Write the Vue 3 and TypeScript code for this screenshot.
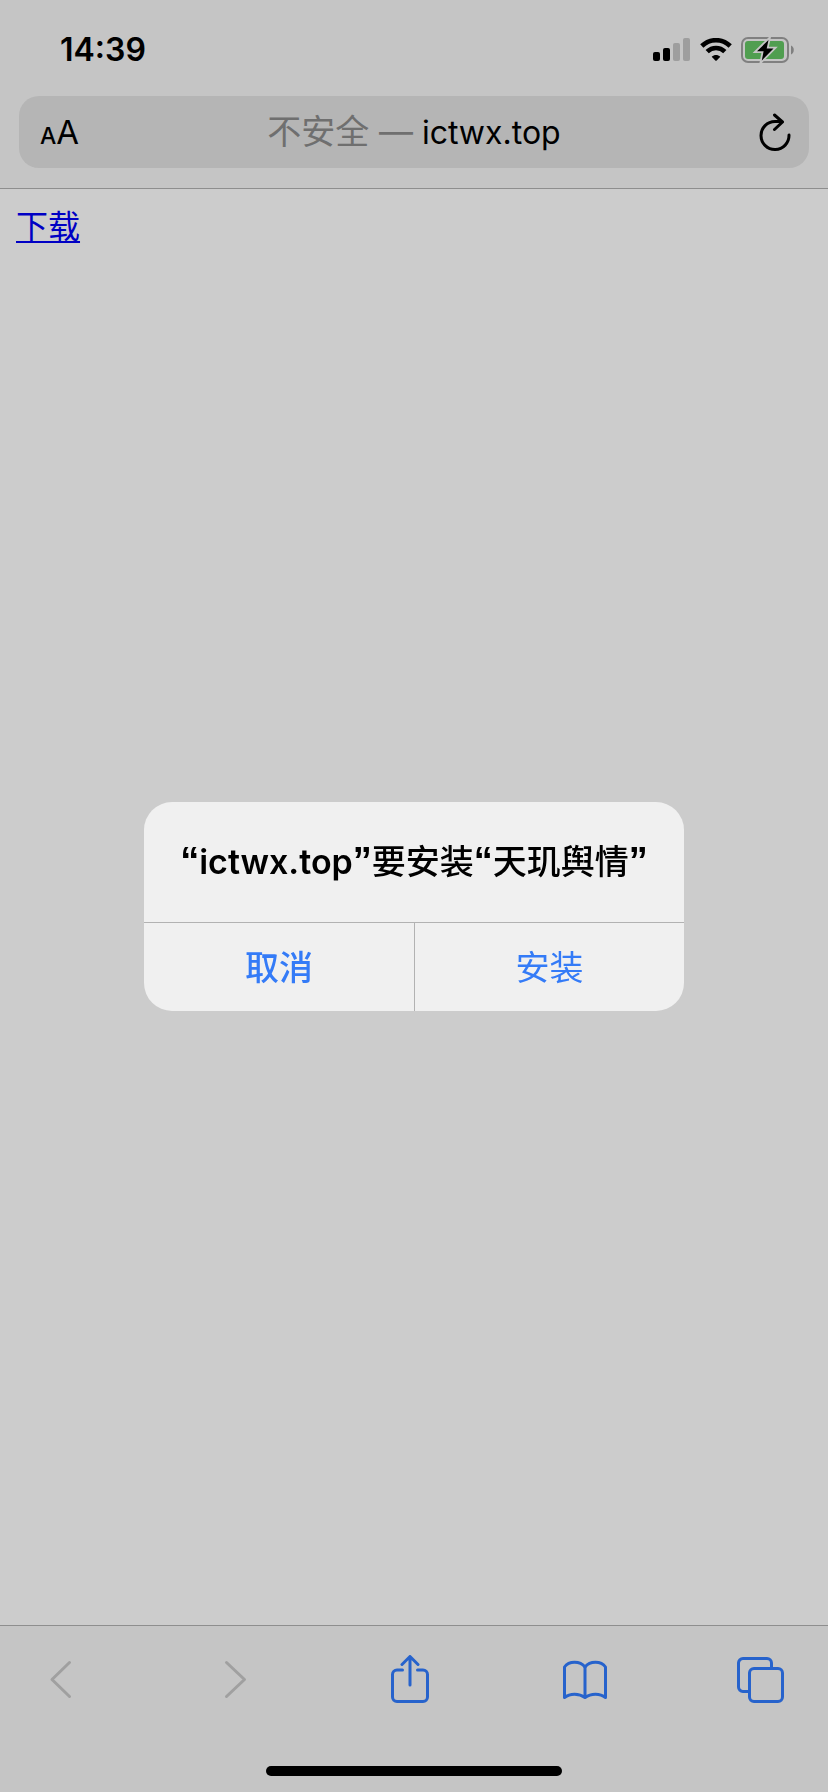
<script setup lang="ts">
import { ref } from 'vue'

interface Tool {
  name: string
  label: string
  disabled: boolean
  paths: string[]
}

const host = 'ictwx.top'
const appName = '天玑舆情'
const alertOpen = ref(true)

const tools: Tool[] = [
  { name: 'back', label: '后退', disabled: true, paths: ['M33.5 7.5 16 24.5 33.5 41.5'] },
  { name: 'forward', label: '前进', disabled: true, paths: ['M15.5 7.5 33.5 24.5 15.5 41.5'] },
  {
    name: 'share',
    label: '共享',
    disabled: false,
    paths: [
      'M16.5 15H11a4.5 4.5 0 0 0-4.5 4.5V42a4.5 4.5 0 0 0 4.5 4.5h26a4.5 4.5 0 0 0 4.5-4.5V19.5A4.5 4.5 0 0 0 37 15h-5.5',
      'M24 30V2M16 9.5l8-8 8 8',
    ],
  },
  {
    name: 'bookmarks',
    label: '书签',
    disabled: false,
    paths: [
      'M3.5 42.5V12C8 5.7 19 5.7 24 12 29 5.7 40 5.7 44.5 12V42.5C39 38 30 38 24 42.5 18 38 9 38 3.5 42.5Z',
      'M24 12V42',
    ],
  },
  {
    name: 'tabs',
    label: '标签页',
    disabled: false,
    paths: [
      'M13 36.5H7A4.5 4.5 0 0 1 2.5 32V8A4.5 4.5 0 0 1 7 3.5H31A4.5 4.5 0 0 1 35.5 8V13',
      'M18 13.5H42A4.5 4.5 0 0 1 46.5 18V42A4.5 4.5 0 0 1 42 46.5H18A4.5 4.5 0 0 1 13.5 42V18A4.5 4.5 0 0 1 18 13.5Z',
    ],
  },
]
</script>

<template>
  <div class="screen">
    <header class="top">
      <div class="status">
        <time class="clock">14:39</time>
        <div class="indicators">
          <svg class="signal" viewBox="0 0 38 24" aria-hidden="true">
            <rect x="0" y="14" width="7" height="9" rx="2" />
            <rect x="10" y="10" width="7" height="13" rx="2" />
            <rect class="faint" x="20" y="5" width="7" height="18" rx="2" />
            <rect class="faint" x="30" y="0" width="7" height="23" rx="2" />
          </svg>
          <svg class="wifi" viewBox="0 0 32 24" aria-hidden="true">
            <path class="arc" d="M1.8 8C9.8 .2 22.2 .2 30.2 8" />
            <path class="arc" d="M7.2 13.6C12.2 8.7 19.8 8.7 24.8 13.6" />
            <path d="M11.7 18.7C14.2 16.5 17.8 16.5 20.3 18.7L16.7 22.5Q16 23.2 15.3 22.5Z" />
          </svg>
          <svg class="battery" viewBox="0 0 54 26" aria-hidden="true">
            <rect class="shell" x="1" y="1" width="46" height="24" rx="6" />
            <rect class="charge" x="4" y="4" width="39" height="18" rx="3" />
            <path class="tip" d="M50 8.5C53.7 10 53.7 16 50 17.5Z" />
            <path class="bolt" d="M27.5 3 16 14.2H22.6L20.8 23.5 32.5 11.6H25.7Z" />
          </svg>
        </div>
      </div>
      <div class="address">
        <button class="reader" type="button" aria-label="网页显示设置">
          <span class="small-a">A</span><span class="large-a">A</span>
        </button>
        <button class="location" type="button">
          <span class="insecure">不安全 —</span> {{ host }}
        </button>
        <button class="reload" type="button" aria-label="重新载入">
          <svg viewBox="0 0 32 38" aria-hidden="true">
            <path d="M30 22A14 14 0 1 1 16 8.5H23M15.5 2 23.5 9 15.5 16.5" />
          </svg>
        </button>
      </div>
    </header>

    <main class="page">
      <a class="download" href="#download">下载</a>
    </main>

    <footer class="bottom">
      <nav class="tools" aria-label="工具栏">
        <button
          v-for="tool in tools"
          :key="tool.name"
          class="tool"
          type="button"
          :aria-label="tool.label"
          :disabled="tool.disabled"
        >
          <svg viewBox="0 0 48 48" aria-hidden="true">
            <path v-for="d in tool.paths" :key="d" :d="d" />
          </svg>
        </button>
      </nav>
      <div class="home"></div>
    </footer>

    <div v-if="alertOpen" class="overlay">
      <section class="alert" role="alertdialog" aria-modal="true" aria-labelledby="alert-title">
        <h1 id="alert-title" class="alert-title">
          <span class="quote">“</span><span class="host">{{ host }}</span><span class="quote">”</span>要安装<span class="quote">“</span>{{ appName }}<span class="quote">”</span>
        </h1>
        <div class="actions">
          <button class="action cancel" type="button" @click="alertOpen = false">取消</button>
          <button class="action install" type="button" @click="alertOpen = false">安装</button>
        </div>
      </section>
    </div>
  </div>
</template>

<style>
body {
  margin: 0;
  background: #ccc;
}
</style>

<style scoped>
.screen {
  display: flex;
  flex-direction: column;
  min-height: 100vh;
  background: #ccc;
  color: #000;
  font-family: Inter, 'Noto Sans CJK SC', sans-serif;
}

button {
  margin: 0;
  padding: 0;
  border: 0;
  background: none;
  color: inherit;
  font: inherit;
}

svg {
  display: block;
}

.top {
  padding-bottom: 20px;
  border-bottom: 1px solid #8e8e8e;
  background: #c5c5c5;
}

.status {
  display: flex;
  align-items: center;
  justify-content: space-between;
  height: 96px;
  padding: 4px 33px 0 60px;
  box-sizing: border-box;
}

.clock {
  font-size: 32px;
  font-weight: 600;
  line-height: 40px;
}

.indicators {
  display: flex;
  align-items: center;
  gap: 9px;
}

.signal {
  width: 38px;
  height: 24px;
}

.faint {
  fill: #9e9e9e;
}

.wifi {
  width: 32px;
  height: 24px;
}

.arc {
  fill: none;
  stroke: #000;
  stroke-width: 4.6;
}

.battery {
  width: 54px;
  height: 26px;
}

.shell {
  fill: none;
  stroke: #808080;
  stroke-width: 2;
}

.charge {
  fill: #509e50;
}

.tip {
  fill: #808080;
}

.bolt {
  stroke: #c5c5c5;
  stroke-width: 3.6;
  paint-order: stroke;
}

.address {
  display: grid;
  grid-template-columns: 64px 1fr 64px;
  align-items: center;
  height: 72px;
  margin: 0 19px;
  border-radius: 20px;
  background: #b5b5b5;
}

.reader {
  display: flex;
  align-items: baseline;
  padding: 4px 0 0 21px;
  line-height: 40px;
}

.small-a {
  font-size: 23px;
  font-weight: 500;
}

.large-a {
  font-size: 33px;
}

.location {
  font-size: 32px;
  line-height: 48px;
  white-space: nowrap;
}

.insecure {
  color: #6f6f6f;
  font-size: 34px;
}

.reload {
  justify-self: end;
  padding-right: 18px;
}

.reload svg {
  width: 32px;
  height: 38px;
  fill: none;
  stroke: #000;
  stroke-width: 3;
  stroke-linecap: round;
  stroke-linejoin: round;
}

.page {
  flex: 1;
  padding: 16px;
}

.download {
  color: #0000c4;
  font-size: 32px;
  line-height: 44px;
  text-decoration-thickness: 2px;
  text-underline-offset: 3px;
}

.bottom {
  display: flex;
  flex-direction: column;
  align-items: center;
  justify-content: space-between;
  min-height: 167px;
  padding: 29px 0 16px;
  box-sizing: border-box;
  border-top: 1px solid #8e8e8e;
  background: #c5c5c5;
}

.tools {
  display: flex;
  align-self: stretch;
  justify-content: space-between;
  padding: 0 44px 0 36px;
}

.tool {
  color: #2763cc;
}

.tool:disabled {
  color: #a0a0a0;
}

.tool svg {
  width: 48px;
  height: 48px;
  fill: none;
  stroke: currentColor;
  stroke-width: 3;
  stroke-linecap: round;
  stroke-linejoin: round;
}

.home {
  width: 296px;
  height: 10px;
  border-radius: 5px;
  background: #000;
}

.overlay {
  position: fixed;
  inset: 0;
  display: flex;
  align-items: center;
  justify-content: center;
  padding-top: 21px;
}

.alert {
  width: 540px;
  max-width: 90%;
  overflow: hidden;
  border-radius: 28px;
  background: #f0f0f0;
}

.alert-title {
  margin: 0;
  padding: 36px 16px;
  font-size: 34px;
  font-weight: 500;
  line-height: 48px;
  text-align: center;
}

.host {
  font-weight: 600;
  line-height: 1;
}

.quote {
  font-family: 'Liberation Sans', sans-serif;
  font-size: 38px;
  font-weight: 700;
  line-height: 1;
}

.actions {
  display: grid;
  grid-template-columns: 1fr 1fr;
  border-top: 1px solid #b2b2b2;
}

.action {
  height: 88px;
  padding-bottom: 4px;
  color: #347bf7;
  font-size: 34px;
}

.cancel {
  font-weight: 500;
}

.install {
  border-left: 1px solid #b2b2b2;
}
</style>
